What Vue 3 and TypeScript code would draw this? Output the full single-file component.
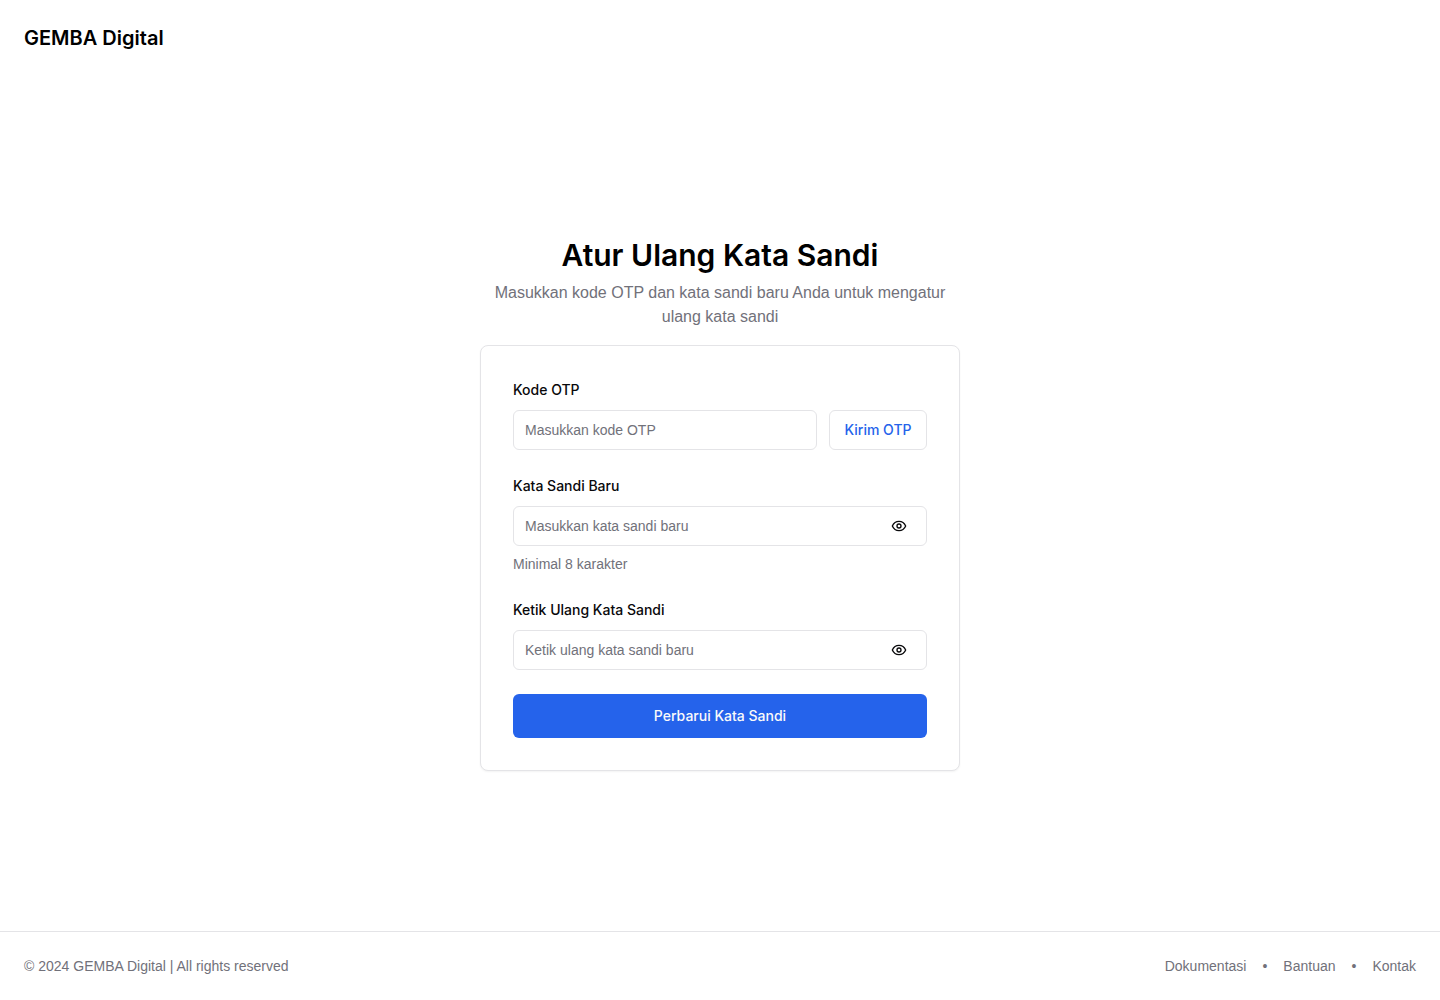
<script setup lang="ts">
import { ref } from 'vue'

interface PasswordField {
  id: string
  label: string
  placeholder: string
  hint?: string
}

const passwordFields: PasswordField[] = [
  {
    id: 'new-password',
    label: 'Kata Sandi Baru',
    placeholder: 'Masukkan kata sandi baru',
    hint: 'Minimal 8 karakter',
  },
  {
    id: 'confirm-password',
    label: 'Ketik Ulang Kata Sandi',
    placeholder: 'Ketik ulang kata sandi baru',
  },
]

const links: string[] = ['Dokumentasi', 'Bantuan', 'Kontak']

const otp = ref('')
const values = ref<Record<string, string>>({})
const visible = ref<Record<string, boolean>>({})

function toggle(id: string): void {
  visible.value[id] = !visible.value[id]
}
</script>

<template>
  <div class="page">
    <header class="header">
      <span class="brand">GEMBA Digital</span>
    </header>

    <main class="main">
      <div class="content">
        <div class="intro">
          <h1 class="title">Atur Ulang Kata Sandi</h1>
          <p class="subtitle">Masukkan kode OTP dan kata sandi baru Anda untuk mengatur ulang kata sandi</p>
        </div>

        <form class="card" @submit.prevent>
          <div class="field">
            <label class="label" for="otp">Kode OTP</label>
            <div class="otp-row">
              <input id="otp" v-model="otp" class="input" type="text" placeholder="Masukkan kode OTP" />
              <button class="button outline" type="button">Kirim OTP</button>
            </div>
          </div>

          <div v-for="field in passwordFields" :key="field.id" class="field">
            <label class="label" :for="field.id">{{ field.label }}</label>
            <div class="password">
              <input
                :id="field.id"
                v-model="values[field.id]"
                class="input with-toggle"
                :type="visible[field.id] ? 'text' : 'password'"
                :placeholder="field.placeholder"
              />
              <button class="toggle" type="button" aria-label="Tampilkan kata sandi" @click="toggle(field.id)">
                <svg class="eye" viewBox="0 0 24 24" aria-hidden="true">
                  <path d="M2 12s3-7 10-7 10 7 10 7-3 7-10 7-10-7-10-7Z" />
                  <circle cx="12" cy="12" r="3" />
                </svg>
              </button>
            </div>
            <p v-if="field.hint" class="hint">{{ field.hint }}</p>
          </div>

          <button class="button primary" type="submit">Perbarui Kata Sandi</button>
        </form>
      </div>
    </main>

    <footer class="footer">
      <p class="copyright">© 2024 GEMBA Digital | All rights reserved</p>
      <nav class="links">
        <template v-for="(link, index) in links" :key="link">
          <span v-if="index > 0" class="dot">•</span>
          <a class="link" href="#">{{ link }}</a>
        </template>
      </nav>
    </footer>
  </div>
</template>

<style>
body {
  margin: 0;
  background: #fff;
}
</style>

<style scoped>
.page {
  display: flex;
  flex-direction: column;
  min-height: 100vh;
  color: #09090b;
  font-family: "Liberation Sans", Arial, sans-serif;
  font-size: 14px;
  line-height: 20px;
}

.page *,
.page {
  box-sizing: border-box;
}

.header {
  padding: 24px;
}

.brand,
.title,
.label,
.page .button {
  font-family: Inter, "Liberation Sans", sans-serif;
}

.brand {
  display: block;
  color: #000;
  font-size: 20px;
  font-weight: 600;
  line-height: 28px;
}

.main {
  display: flex;
  flex: 1;
  align-items: center;
  justify-content: center;
}

.content {
  display: flex;
  flex-direction: column;
  gap: 16px;
  width: 100%;
  max-width: 480px;
}

.intro {
  display: flex;
  flex-direction: column;
  gap: 8px;
  text-align: center;
}

.title {
  margin: 0;
  color: #000;
  font-size: 30px;
  font-weight: 600;
  line-height: 36px;
}

.subtitle {
  margin: 0;
  color: #71717a;
  font-size: 16px;
  line-height: 24px;
}

.card {
  display: flex;
  flex-direction: column;
  gap: 24px;
  padding: 32px;
  border: 1px solid #e4e4e7;
  border-radius: 8px;
  background: #fff;
  box-shadow: 0 1px 2px rgba(0, 0, 0, 0.05);
}

.field {
  display: flex;
  flex-direction: column;
  gap: 8px;
}

.label {
  font-weight: 500;
  line-height: 24px;
}

.otp-row {
  display: flex;
  gap: 12px;
}

.input {
  flex: 1;
  width: 100%;
  min-width: 0;
  height: 40px;
  padding: 8px 11px;
  border: 1px solid #e4e4e7;
  border-radius: 6px;
  background: #fff;
  color: inherit;
  font: inherit;
}

.input::placeholder {
  color: #71717a;
  opacity: 1;
}

.with-toggle {
  padding-right: 48px;
}

.button {
  border-radius: 6px;
  font: inherit;
  font-weight: 500;
  white-space: nowrap;
  cursor: pointer;
}

.outline {
  min-width: 98px;
  height: 40px;
  padding: 0 12px;
  border: 1px solid #e4e4e7;
  background: #fff;
  color: #2563eb;
}

.primary {
  width: 100%;
  height: 44px;
  border: 0;
  background: #2563eb;
  color: #fafafa;
}

.password {
  position: relative;
  display: flex;
}

.toggle {
  position: absolute;
  top: 0;
  right: 8px;
  display: flex;
  align-items: center;
  height: 100%;
  padding: 0 12px;
  border: 0;
  background: transparent;
  color: #09090b;
  cursor: pointer;
}

.eye {
  width: 16px;
  height: 16px;
  fill: none;
  stroke: currentColor;
  stroke-width: 2;
  stroke-linecap: round;
  stroke-linejoin: round;
}

.hint {
  margin: 0;
  color: #71717a;
}

.footer {
  display: flex;
  align-items: center;
  justify-content: space-between;
  padding: 24px;
  border-top: 1px solid #e4e4e7;
  color: #71717a;
}

.copyright {
  margin: 0;
}

.links {
  display: flex;
  gap: 16px;
}

.link {
  color: inherit;
  text-decoration: none;
}
</style>
